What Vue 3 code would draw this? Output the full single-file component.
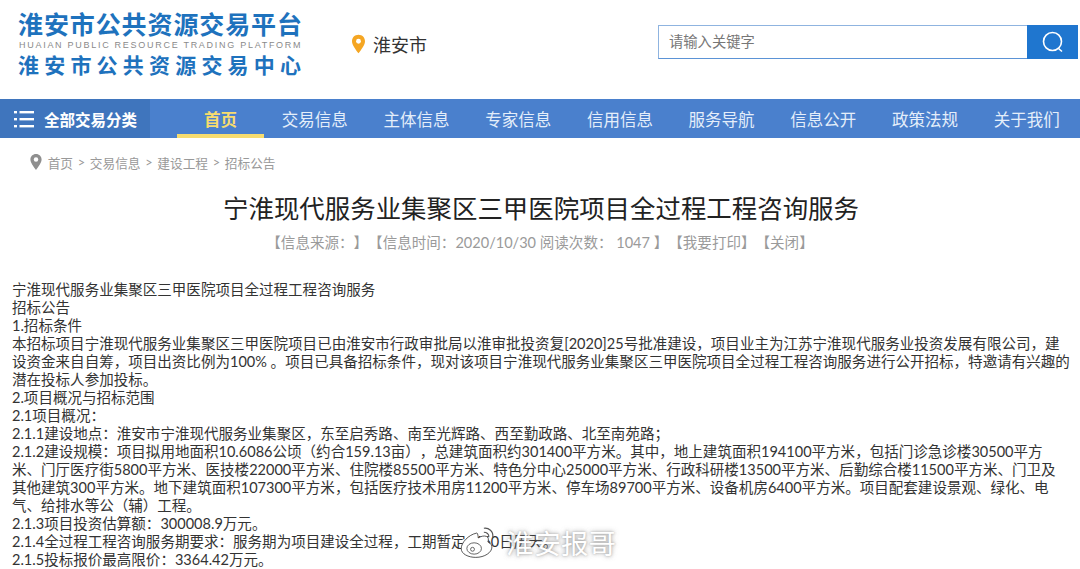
<script setup>
const navItems = ['首页', '交易信息', '主体信息', '专家信息', '信用信息', '服务导航', '信息公开', '政策法规', '关于我们']
const crumbs = ['首页', '交易信息', '建设工程', '招标公告']

const lines = [
  '宁淮现代服务业集聚区三甲医院项目全过程工程咨询服务',
  '招标公告',
  '1.招标条件',
  '本招标项目宁淮现代服务业集聚区三甲医院项目已由淮安市行政审批局以淮审批投资复[2020]25号批准建设，项目业主为江苏宁淮现代服务业投资发展有限公司，建',
  '设资金来自自筹，项目出资比例为100% 。项目已具备招标条件，现对该项目宁淮现代服务业集聚区三甲医院项目全过程工程咨询服务进行公开招标，特邀请有兴趣的',
  '潜在投标人参加投标。',
  '2.项目概况与招标范围',
  '2.1项目概况：',
  '2.1.1建设地点：淮安市宁淮现代服务业集聚区，东至启秀路、南至光辉路、西至勤政路、北至南苑路；',
  '2.1.2建设规模：项目拟用地面积10.6086公顷（约合159.13亩），总建筑面积约301400平方米。其中，地上建筑面积194100平方米，包括门诊急诊楼30500平方',
  '米、门厅医疗街5800平方米、医技楼22000平方米、住院楼85500平方米、特色分中心25000平方米、行政科研楼13500平方米、后勤综合楼11500平方米、门卫及',
  '其他建筑300平方米。地下建筑面积107300平方米，包括医疗技术用房11200平方米、停车场89700平方米、设备机房6400平方米。项目配套建设景观、绿化、电',
  '气、给排水等公（辅）工程。',
  '2.1.3项目投资估算额：300008.9万元。',
  '2.1.4全过程工程咨询服务期要求：服务期为项目建设全过程，工期暂定1460日历天。',
  '2.1.5投标报价最高限价：3364.42万元。',
]
</script>

<template>
  <div class="page">
    <header class="top">
      <div class="logo">
        <div class="logo__main">淮安市公共资源交易平台</div>
        <div class="logo__en">HUAIAN PUBLIC RESOURCE TRADING PLATFORM</div>
        <div class="logo__sub">淮安市公共资源交易中心</div>
      </div>
      <div class="city">
        <svg width="13" height="20" viewBox="0 0 14 20">
          <path d="M7 0C3 0 0 3 0 7c0 4 4 9 7 13 3-4 7-9 7-13 0-4-3-7-7-7z" fill="#f5a623" />
          <circle cx="7" cy="7" r="2.6" fill="#fff" />
        </svg>
        <span>淮安市</span>
      </div>
      <div class="search">
        <div class="search__input">请输入关键字</div>
        <div class="search__btn">
          <svg width="24" height="24" viewBox="0 0 24 24" fill="none" stroke="#fff" stroke-width="1.6">
            <circle cx="11.5" cy="11.5" r="9" />
            <path d="M17.5 18.5l3.5 3" />
          </svg>
        </div>
      </div>
    </header>

    <nav class="nav">
      <div class="nav__all">
        <svg width="20" height="18" viewBox="0 0 20 18" fill="#fff">
          <rect x="0" y="1" width="3" height="2.4" />
          <rect x="0" y="8" width="3" height="2.4" />
          <rect x="0" y="15" width="3" height="2.4" />
          <rect x="5.5" y="1" width="14.5" height="2.4" />
          <rect x="5.5" y="8" width="14.5" height="2.4" />
          <rect x="5.5" y="15" width="14.5" height="2.4" />
        </svg>
        <span>全部交易分类</span>
      </div>
      <div class="nav__list">
        <div v-for="(item, i) in navItems" :key="item" class="nav__item" :class="{ 'nav__item--active': i === 0 }">
          {{ item }}
        </div>
      </div>
    </nav>

    <div class="crumbs">
      <svg class="crumbs__pin" width="12" height="16" viewBox="0 0 14 20">
        <path d="M7 0C3 0 0 3 0 7c0 4 4 9 7 13 3-4 7-9 7-13 0-4-3-7-7-7z" fill="#8f8f8f" />
        <circle cx="7" cy="7" r="2.8" fill="#fff" />
      </svg>
      <template v-for="(crumb, i) in crumbs" :key="crumb">
        <span v-if="i > 0">&gt;</span>
        <span>{{ crumb }}</span>
      </template>
    </div>

    <h1 class="title">宁淮现代服务业集聚区三甲医院项目全过程工程咨询服务</h1>
    <div class="meta">【信息来源：】【信息时间：2020/10/30 阅读次数： 1047 】【我要打印】【关闭】</div>

    <div class="content">
      <div v-for="line in lines" :key="line" class="content__line">{{ line }}</div>
    </div>

    <div class="mark">
      <svg width="42" height="34" viewBox="0 0 50 42" fill="none">
        <path d="M22 10C12 12 3 22 3 29c0 7 9 11 18 11 11 0 20-6 20-13 0-4-4-5-5-6 1-3 1-6-2-7-3-1-7 0-10 2 0-3-1-7-2-6z" fill="#fff" stroke="#333" stroke-width="1" />
        <ellipse cx="19" cy="29" rx="9" ry="7" stroke="#444" stroke-width="1" />
        <circle cx="17" cy="30" r="2.4" stroke="#444" stroke-width="1" />
        <path d="M31 4c6-1 12 4 11 11M31 9c3 0 7 2 6 6" stroke="#555" stroke-width="1.4" />
      </svg>
      <span class="mark__text">淮安报哥</span>
    </div>
  </div>
</template>

<style scoped>
.page {
  position: relative;
  width: 1080px;
  height: 569px;
  overflow: hidden;
  background: #fff;
  font-family: Lato, "Noto Sans CJK SC", sans-serif;
  text-spacing-trim: space-all;
}

.top {
  display: flex;
  align-items: center;
  height: 99px;
  padding-left: 18px;
  box-sizing: border-box;
}

.logo {
  align-self: flex-start;
  width: 284px;
  margin-top: 8px;
  color: #1e72bd;
  font-family: "Noto Sans CJK SC", sans-serif;
  font-weight: 700;
  white-space: nowrap;
}

.logo__main {
  font-size: 25px;
  line-height: 30px;
  letter-spacing: 0.9px;
}

.logo__en {
  margin: 2px 0 0 1px;
  font-family: "Liberation Sans", sans-serif;
  font-size: 9px;
  line-height: 11px;
  font-weight: 400;
  letter-spacing: 1.72px;
  color: #8a8a8a;
}

.logo__sub {
  font-size: 21px;
  line-height: 27px;
  letter-spacing: 5.2px;
}

.city {
  display: flex;
  align-items: center;
  gap: 8px;
  margin-left: 50px;
  margin-top: -11px;
  font-size: 18px;
  color: #333;
}

.search {
  display: flex;
  margin-left: auto;
  margin-right: 2px;
  margin-top: -16px;
  width: 420px;
  height: 34px;
}

.search__input {
  flex: 1;
  box-sizing: border-box;
  padding-left: 10px;
  border: 1px solid #8fb4e0;
  border-bottom-color: #5b93d6;
  border-right: 0;
  font-size: 14.3px;
  line-height: 32px;
  color: #777;
}

.search__btn {
  display: flex;
  align-items: center;
  justify-content: center;
  width: 51px;
  background: #1f76cf;
}

.nav {
  display: flex;
  height: 39px;
  background: #4a80cd;
  color: #fff;
}

.nav__all {
  display: flex;
  flex: none;
  align-items: center;
  gap: 10px;
  width: 150px;
  padding-left: 14px;
  box-sizing: border-box;
  background: #3f75bd;
  font-size: 15.5px;
  font-weight: 700;
}

.nav__list {
  display: flex;
  flex: none;
  padding-left: 27px;
}

.nav__item {
  flex: none;
  width: 101.7px;
  text-align: center;
  font-size: 16.5px;
  line-height: 42px;
  color: #e4eefa;
  white-space: nowrap;
}

.nav__item--active {
  position: relative;
  width: 87px;
  color: #f7dc6f;
  font-weight: 700;
}

.nav__item--active::after {
  content: "";
  position: absolute;
  left: 0;
  bottom: 0;
  width: 100%;
  height: 4px;
  background: #f7dc6f;
}

.crumbs {
  display: flex;
  align-items: center;
  gap: 4.7px;
  height: 48px;
  margin-bottom: 2px;
  padding-left: 30px;
  font-size: 12.7px;
  color: #999;
}

.crumbs__pin {
  margin-right: 1px;
}

.title {
  margin: 0;
  padding-left: 2px;
  text-align: center;
  font-family: "Noto Sans CJK SC", sans-serif;
  font-size: 25.45px;
  line-height: 38px;
  font-weight: 400;
  color: #222;
  white-space: nowrap;
}

.meta {
  margin-top: 7px;
  text-align: center;
  font-size: 14.55px;
  line-height: 20px;
  color: #9a9a9a;
  white-space: nowrap;
}

.content {
  margin-top: 28px;
  padding-left: 12px;
  font-size: 14.54px;
  line-height: 18px;
  color: #333;
  white-space: nowrap;
}

.mark {
  position: absolute;
  left: 458px;
  top: 524px;
  display: flex;
  align-items: center;
  gap: 6px;
}

.mark__text {
  font-family: "Noto Sans CJK SC", sans-serif;
  font-size: 27.5px;
  line-height: 36px;
  color: #fff;
  text-shadow: 0 0 5px rgba(110, 110, 110, 0.7), 0 0 2px rgba(150, 150, 150, 0.6);
}
</style>

<style>
html, body {
  margin: 0;
  overflow: hidden;
}
</style>
